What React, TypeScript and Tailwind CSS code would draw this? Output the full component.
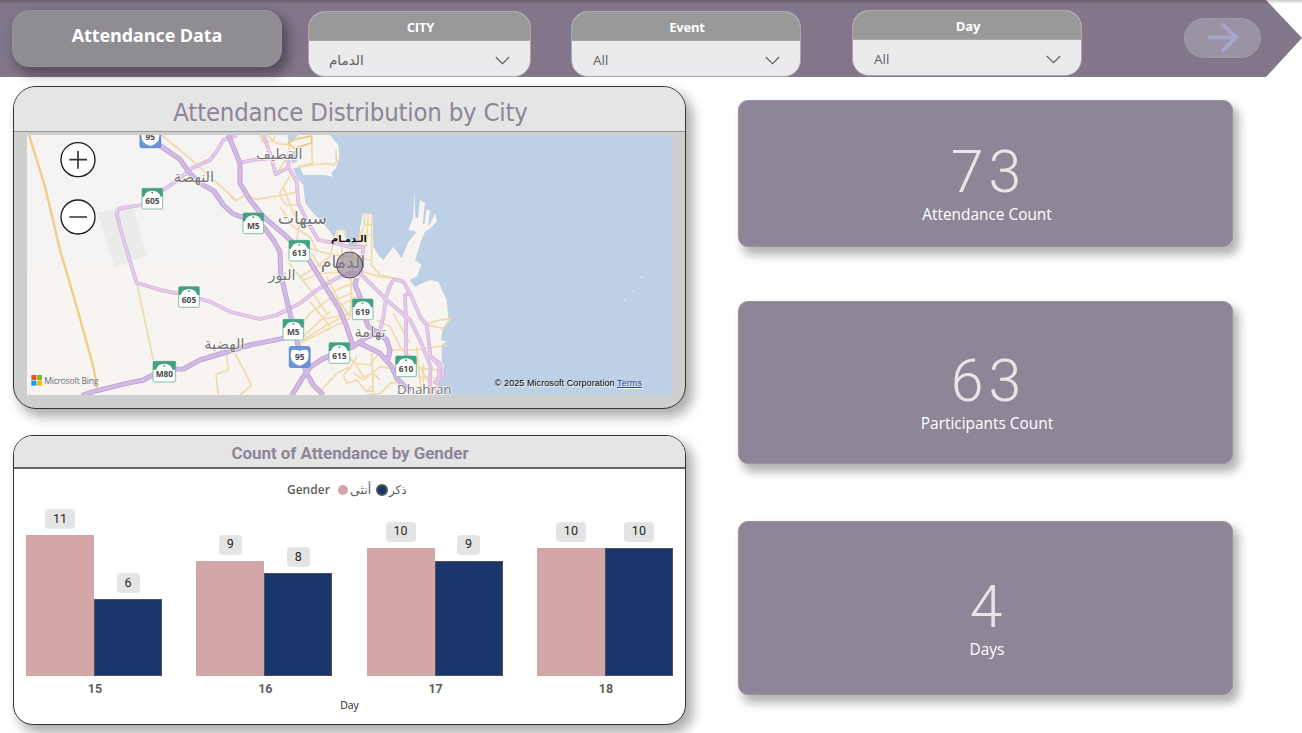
import React from "react";

/* Road geometry of the map tile, in tile units (three per CSS pixel). */
const arterial = [
  "M450 197L510 238L535 275L570 310L612 333L640 375L670 402L700 412L760 440L790 480L810 515L812 580L830 660L850 740L865 800L890 880L910 915L940 945",
  "M655 165L690 250L690 310L720 360L760 410L830 470L880 520L900 545L940 610L990 690L1010 740L1030 800",
  "M215 947L250 935L350 910L400 900L460 868L520 867L570 840L660 813L720 795L820 775L850 770",
  "M845 947L880 890L900 862L935 838L990 815L1030 800L1065 775L1110 755",
  "M1050 790L1110 820L1145 860L1160 895L1200 935",
  "M1040 595L1035 615L1050 650L1060 700L1075 740L1100 755L1130 780L1140 810L1135 835L1125 840",
];
const highway = [
  "M680 165L640 180L620 215L600 240L545 265L490 310L430 350L395 375L330 385L320 400L335 460L350 510L380 608L460 632L530 645L600 665L660 695L750 717L800 705L870 670L920 630L980 595L1020 578L1050 580L1090 620L1130 660L1200 720L1230 780L1262 860L1258 947",
  "M690 248L730 240L790 234",
  "M760 165L785 235L797 283L835 262L835 225",
  "M835 262L860 305L865 370L895 430L925 480L980 490L1020 502L1060 500L1052 580",
  "M1110 755L1122 700L1128 650L1140 618L1152 597L1180 605L1205 650L1230 710L1250 735L1262 830L1290 850L1285 900L1280 947",
  "M1205 638L1185 645L1188 720L1188 840",
  "M1262 830L1300 870L1298 890L1270 910",
];
const streets = [
  "M455 165L545 240L680 362L705 345L740 358L820 345L865 335",
  "M315 400L380 608L400 700L430 840",
  "M650 823L655 870L618 883L625 945",
  "M675 820L725 915L690 945",
  "M660 350L680 362",
  "M750 165L755 185L790 183L795 165M770 165L800 190L840 195L830 235L800 280",
  "M860 262L905 255L950 250L970 256L980 245L978 210",
  "M905 190L907 250L865 258M855 205L905 188L905 168L855 178L835 190",
  "M840 290L810 335L810 350L828 375L865 375M820 320L850 400L870 430L860 480",
  "M810 380L850 440L900 470L920 510",
  "M1064 400L1062 440L1048 470L1045 500M1085 402L1085 560M1058 432L1085 435M1052 465L1084 465M1075 402L1068 500",
  "M982 450L982 485L1005 485M985 450L1003 450L1005 470",
  "M835 548L870 590L905 635L950 700M870 490L900 505L950 520L1010 530L1080 540",
  "M870 590L920 560L960 530L970 490M880 600L930 580L1000 575M905 520L930 560L990 550L1045 560",
  "M900 665L960 740M950 590L985 660L1020 710L1025 640L1020 580",
  "M960 640L1000 620L1030 610M975 660L1025 640M985 680L1040 650M930 720L1020 700M995 500L1000 560M1025 500L1030 590",
  "M880 780L950 735L990 715L1020 700M870 790L930 760L1020 715",
  "M870 740L900 700L960 655M875 775L960 695",
  "M1055 575L1110 590L1180 600M1085 555L1110 585L1145 592",
  "M1100 720L1140 740L1170 800L1200 830M1150 700L1200 790M1140 810L1220 810L1310 795",
  "M1240 735L1290 720L1322 715L1300 745L1250 735",
  "M1220 800L1225 860L1235 945M1200 860L1300 872M1220 890L1290 895M1240 850L1240 945M1210 830L1280 945",
  "M1000 815L1035 850L1080 855L1110 815M1035 850L1060 890L1090 880L1110 900",
  "M1040 830L1020 865L1000 885L1010 910L1040 900L1070 935L1090 915M1085 820L1090 935L1060 930M1030 880L1060 900L1110 860L1140 865",
  "M935 930L980 880L1020 860M1070 945L1110 940L1140 910L1180 905",
];

type Shield = { x: number; y: number; label: string; blue?: boolean };
const shields: Shield[] = [
  { x: 421, y: 172, label: "95", blue: true },
  { x: 427, y: 356, label: "605" },
  { x: 730, y: 430, label: "M5" },
  { x: 868, y: 512, label: "613" },
  { x: 537, y: 651, label: "605" },
  { x: 463, y: 875, label: "M80" },
  { x: 850, y: 749, label: "M5" },
  { x: 869, y: 831, label: "95", blue: true },
  { x: 1058, y: 688, label: "619" },
  { x: 988, y: 819, label: "615" },
  { x: 1188, y: 859, label: "610" },
];

const places = [
  { x: 808, y: 236, s: 43, t: "القطيف" },
  { x: 552, y: 306, s: 44, t: "النهضة" },
  { x: 877, y: 432, s: 52, t: "سيهات" },
  { x: 999, y: 563, s: 52, t: "الدمام" },
  { x: 816, y: 600, s: 43, t: "النور" },
  { x: 643, y: 808, s: 44, t: "الهضبة" },
  { x: 1080, y: 772, s: 44, t: "تهامة" },
];

function ShieldMark({ x, y, label, blue }: Shield) {
  const w = label === "M80" ? 34 : 31;
  return (
    <g transform={`translate(${x} ${y})`}>
      <rect x={-w} y="-31" width={w * 2} height="62" rx="5" fill={blue ? "#6a96dc" : "#fff"} stroke={blue ? "#5b86cb" : "#7fc0a9"} strokeWidth="3" />
      {blue ? (
        <path d="M-24 -20Q-12 -24 0 -18Q12 -24 24 -20Q30 -4 23 12Q15 22 0 26Q-15 22 -23 12Q-30 -4 -24 -20Z" fill="#fff" />
      ) : (
        <>
          <path d={`M${-w} -31H${w}V-6H25Q20 -24 0 -24Q-20 -24 -25 -6H${-w}Z`} fill="#43a083" />
          <circle cx="0" cy="-18" r="3" fill="#43a083" />
        </>
      )}
      <text y={blue ? 8 : 17} textAnchor="middle" fontSize="25" fontWeight="700" fill="#4a4a4a" fontFamily="Open Sans, sans-serif">{label}</text>
    </g>
  );
}

function CityMap() {
  return (
    <svg className="block overflow-visible" width="646" height="260" viewBox="51 165 1938 780" preserveAspectRatio="none">
      <defs>
        <clipPath id="tile">
          <rect x="51" y="165" width="1938" height="780" />
        </clipPath>
      </defs>
      <g clipPath="url(#tile)">
        <rect x="51" y="165" width="1938" height="780" fill="#f7f4f2" />
        <path d="M51 165H760L660 560L51 570Z" fill="#f4f4f3" opacity=".6" />
        <path d="M262 398L366 372L410 528L314 562Z" fill="#ebebea" />
        <path
          d="M960 165L985 195L988 230L978 265L965 275L967 290L940 285L880 285L870 262L850 265L862 295L880 315L886 370L910 400L940 430L960 455L972 475L980 450L1006 450L1008 480L1045 480L1058 400L1088 402L1090 500L1105 525L1120 540L1150 500L1175 535L1195 485L1220 455L1195 450L1210 410L1213 332L1216 412L1224 415L1230 360L1245 368L1238 432L1244 430L1250 388L1260 393L1254 440L1262 428L1275 400L1281 425L1260 445L1245 455L1232 485L1215 540L1235 555L1220 590L1198 600L1215 620L1260 600L1285 605L1310 660L1315 715L1320 722L1300 740L1292 780L1310 785L1295 795L1295 840L1305 870L1285 915L1300 945H1989V165Z"
          fill="#bdd0e5"
        />
        <path d="M832 165H865L852 178L836 188Z" fill="#bdd0e5" />
        <path d="M842 215L858 212L862 245L845 250Z" fill="#bdd0e5" />
        <path d="M1010 484L1040 484L1045 498L1020 499Z" fill="#bdd0e5" />
        <g fill="none" strokeLinejoin="round" strokeLinecap="butt">
          {streets.map((d) => (
            <path key={d} d={d} stroke="#efdba9" strokeWidth="5" />
          ))}
          <path d="M57 165L105 320L150 510L200 680L250 860L262 930" stroke="#efcd86" strokeWidth="7" />
          <path d="M905 168L905 188L855 205L835 190L855 178Z" stroke="#edca80" strokeWidth="5" />
          {highway.map((d) => (
            <path key={d} d={d} stroke="#cfaed9" strokeWidth="11" />
          ))}
          {highway.map((d) => (
            <path key={d} d={d} stroke="#e6cbec" strokeWidth="7" />
          ))}
          {arterial.map((d) => (
            <path key={d} d={d} stroke="#bda0cf" strokeWidth="15" />
          ))}
          {arterial.map((d) => (
            <path key={d} d={d} stroke="#d3bae6" strokeWidth="10" />
          ))}
        </g>
        <g fill="#f2f2f0">
          <circle cx="1895" cy="591" r="3" />
          <circle cx="1869" cy="634" r="3" opacity=".6" />
          <circle cx="1844" cy="660" r="3" opacity=".6" />
        </g>
        {shields.map((s) => (
          <ShieldMark key={`${s.x}-${s.y}`} {...s} />
        ))}
      </g>
      <g fill="#757575" stroke="#fff" strokeOpacity=".75" strokeWidth="5" paintOrder="stroke" textAnchor="middle" fontFamily="DejaVu Sans, sans-serif">
        {places.map((p) => (
          <text key={p.t} x={p.x} y={p.y} fontSize={p.s}>{p.t}</text>
        ))}
        <text x="1243" y="942" fontSize="40" fontFamily="Open Sans, sans-serif">Dhahran</text>
      </g>
      <text x="1017" y="487" fontSize="29" fontWeight="700" fill="#111" textAnchor="middle" fontFamily="DejaVu Sans, sans-serif">الـدمـام</text>
      <circle cx="1019" cy="555" r="39" fill="#82778a" fillOpacity=".55" stroke="#4a464e" strokeWidth="3" />
      <g stroke="#1a1a1a" strokeWidth="4">
        <circle cx="204" cy="239" r="51" fill="#fff" />
        <circle cx="204" cy="411" r="51" fill="#fff" />
        <path d="M178 239H231M204 213V266M178 411H231" strokeWidth="5" stroke="#333" />
      </g>
      <rect x="64" y="885" width="15" height="15" fill="#f25022" />
      <rect x="81" y="885" width="15" height="15" fill="#80bb2c" />
      <rect x="64" y="902" width="15" height="15" fill="#00a4ef" />
      <rect x="81" y="902" width="15" height="15" fill="#ffb900" />
      <text x="103" y="911" fontSize="26" fill="#666" stroke="#fff" strokeWidth="2" paintOrder="stroke" fontFamily="Open Sans, sans-serif" textLength="162">Microsoft Bing</text>
    </svg>
  );
}

function Slicer({ title, value, className, arabic }: { title: string; value: string; className: string; arabic?: boolean }) {
  return (
    <div className={`flex h-[66px] shrink-0 flex-col overflow-hidden rounded-[17px] border border-[#aaa5b0] bg-[#ebebed] ${className}`}>
      <div className="flex h-[29px] shrink-0 items-center justify-center border-b border-[#a8a8a8] bg-[#999999] pt-[3px] pl-[2px] font-['Open_Sans',sans-serif] text-[13px] font-bold tracking-[-0.2px] text-white">
        {title}
      </div>
      <div className="flex flex-1 items-center justify-between pt-[4px] pr-5 pl-[21px] text-[#605e5c]">
        <span className={arabic ? "-ml-px font-['DejaVu_Sans',sans-serif] text-[13.5px]" : "font-['Open_Sans',sans-serif] text-[13.5px]"}>{value}</span>
        <svg width="15" height="9" viewBox="0 0 15 9" fill="none" stroke="#605e5c" strokeWidth="1.1">
          <path d="M.8 1L7.5 7.7L14.2 1" />
        </svg>
      </div>
    </div>
  );
}

function Kpi({ value, label, className }: { value: string; label: string; className: string }) {
  return (
    <div className={`flex w-[495px] flex-col items-center rounded-[10px] border border-[#9a94a3] bg-[#8e8696] shadow-[5px_7px_10px_1px_rgba(0,0,0,0.3)] ${className}`}>
      <div className="h-[62px] pl-[6px] font-['Roboto',sans-serif] text-[59px] leading-[62px] font-light tracking-[5px] text-[#e6e6e6]">{value}</div>
      <div className="mt-[2px] pl-[3px] font-['Open_Sans',sans-serif] text-[15.4px] leading-5 text-white">{label}</div>
    </div>
  );
}

const days = [
  { day: "15", female: 11, male: 6 },
  { day: "16", female: 9, male: 8 },
  { day: "17", female: 10, male: 9 },
  { day: "18", female: 10, male: 10 },
];

function Bar({ n, className }: { n: number; className: string }) {
  return (
    <div className="flex w-[68px] flex-col items-center">
      <div className={`mb-[6px] flex h-5 items-center justify-center rounded-[4px] bg-[#e4e4e4] font-['Roboto',sans-serif] text-[12.5px] text-[#252423] ${n > 9 ? "w-[30px]" : "w-[23px]"}`}>{n}</div>
      <div className={`w-full ${className}`} style={{ height: n * 12.83 }} />
    </div>
  );
}

export default function App() {
  return (
    <div className="relative h-[733px] w-[1302px] overflow-hidden bg-white">
      <div className="absolute inset-x-0 top-0 h-[77px] bg-[#82778a] [clip-path:polygon(0_0,1266px_0,100%_38px,1266px_100%,0_100%)]" />
      <div className="absolute inset-x-0 top-0 h-1 bg-linear-to-b from-black/20 to-transparent" />
      <header className="relative flex h-[77px] items-start">
        <div className="mt-[10px] ml-3 flex h-[57px] w-[270px] shrink-0 justify-center rounded-[17px] border border-[#96929b] bg-[#908c93] pt-[10px] font-['Open_Sans',sans-serif] text-[18px] leading-7 font-bold tracking-[-0.1px] text-white shadow-[5px_6px_12px_2px_rgba(0,0,0,0.35)]">
          Attendance Data
        </div>
        <Slicer title="CITY" value="الدمام" arabic className="mt-[11px] ml-[26px] w-[223px]" />
        <Slicer title="Event" value="All" className="mt-[11px] ml-[40px] w-[230px]" />
        <Slicer title="Day" value="All" className="mt-[10px] ml-[51px] w-[230px]" />
        <button className="mt-[18px] ml-[102px] flex h-10 w-[77px] shrink-0 items-center justify-center rounded-[20px] border border-[#a099a8] bg-[#9b93a4]">
          <svg width="34" height="34" viewBox="0 0 34 34" fill="none" stroke="#a6a4ca" strokeWidth="4">
            <path d="M2 16.5H30M16 3L30 16.5L16 30.5" />
          </svg>
        </button>
      </header>

      <main className="relative flex items-start">
        <div className="ml-[13px] flex w-[673px] shrink-0 flex-col">
          <section className="mt-[9px] h-[323px] overflow-hidden rounded-[23px] border border-[#333] bg-[#cfcfcf] shadow-[6px_7px_12px_1px_rgba(0,0,0,0.32)]">
            <h2 className="flex h-[45px] items-center justify-center border-b border-[#96939d] bg-[#e5e5e5] pt-[6px] pl-[2px] font-['DejaVu_Sans_Condensed','DejaVu_Sans',sans-serif] text-[25.5px] tracking-[-0.2px] text-[#8e8696] [font-stretch:condensed]">
              Attendance Distribution by City
            </h2>
            <div className="relative mt-[3px] ml-[13px] h-[260px] w-[646px]">
              <CityMap />
              <div className="absolute right-[31px] bottom-[5px] font-['Liberation_Sans',sans-serif] text-[9px] leading-[14px] tracking-[0.08px] whitespace-nowrap text-black [text-shadow:1px_1px_1px_#fff]">
                © 2025 Microsoft Corporation <a className="text-[#2a3fa0] underline">Terms</a>
              </div>
            </div>
          </section>

          <section className="mt-[26px] flex h-[290px] flex-col overflow-hidden rounded-[20px] border border-[#333] bg-white shadow-[6px_7px_12px_1px_rgba(0,0,0,0.32)]">
            <h2 className="flex h-[33px] shrink-0 items-center justify-center border-b-2 border-[#666] bg-[#e5e5e5] pt-1 pl-px font-['Roboto',sans-serif] text-[17px] font-bold tracking-[-0.07px] text-[#8e8696]">
              Count of Attendance by Gender
            </h2>
            <div className="mt-[13px] flex h-4 shrink-0 items-center pl-[273px] text-[12px] text-[#605e5c]">
              <span className="w-[51px] font-['Open_Sans',sans-serif] font-semibold">Gender</span>
              <span className="size-[10px] rounded-full bg-[#d3a6a8]" />
              <span className="ml-[2px] w-[26px] font-['DejaVu_Sans',sans-serif] text-[12.5px]">أنثى</span>
              <span className="size-[12px] rounded-full border-2 border-[#555] bg-[#1a366b]" />
              <span className="ml-px font-['DejaVu_Sans',sans-serif] text-[12px]">ذكر</span>
            </div>
            <div className="mt-1 ml-3 flex h-[174px] shrink-0 items-end gap-[34.3px]">
              {days.map((d) => (
                <div key={d.day} className="flex items-end">
                  <Bar n={d.female} className="bg-[#d3a6a8]" />
                  <Bar n={d.male} className="border border-[#4d5260] bg-[#1a366b]" />
                </div>
              ))}
            </div>
            <div className="mt-1 ml-[13px] flex h-[17px] shrink-0 items-center gap-[34.3px] pt-px font-['Roboto',sans-serif] text-[12.5px] font-bold text-[#605e5c]">
              {days.map((d) => (
                <span key={d.day} className="w-[136px] text-center">{d.day}</span>
              ))}
            </div>
            <div className="text-center font-['Open_Sans',sans-serif] text-[10.5px] leading-4 text-[#252423]">Day</div>
          </section>
        </div>

        <div className="mt-[23px] ml-[52px] flex flex-col">
          <Kpi value="73" label="Attendance Count" className="h-[147px] pt-[40px]" />
          <Kpi value="63" label="Participants Count" className="mt-[54px] h-[163px] pt-[48px]" />
          <Kpi value="4" label="Days" className="mt-[57px] h-[174px] pt-[54px]" />
        </div>
      </main>
    </div>
  );
}
